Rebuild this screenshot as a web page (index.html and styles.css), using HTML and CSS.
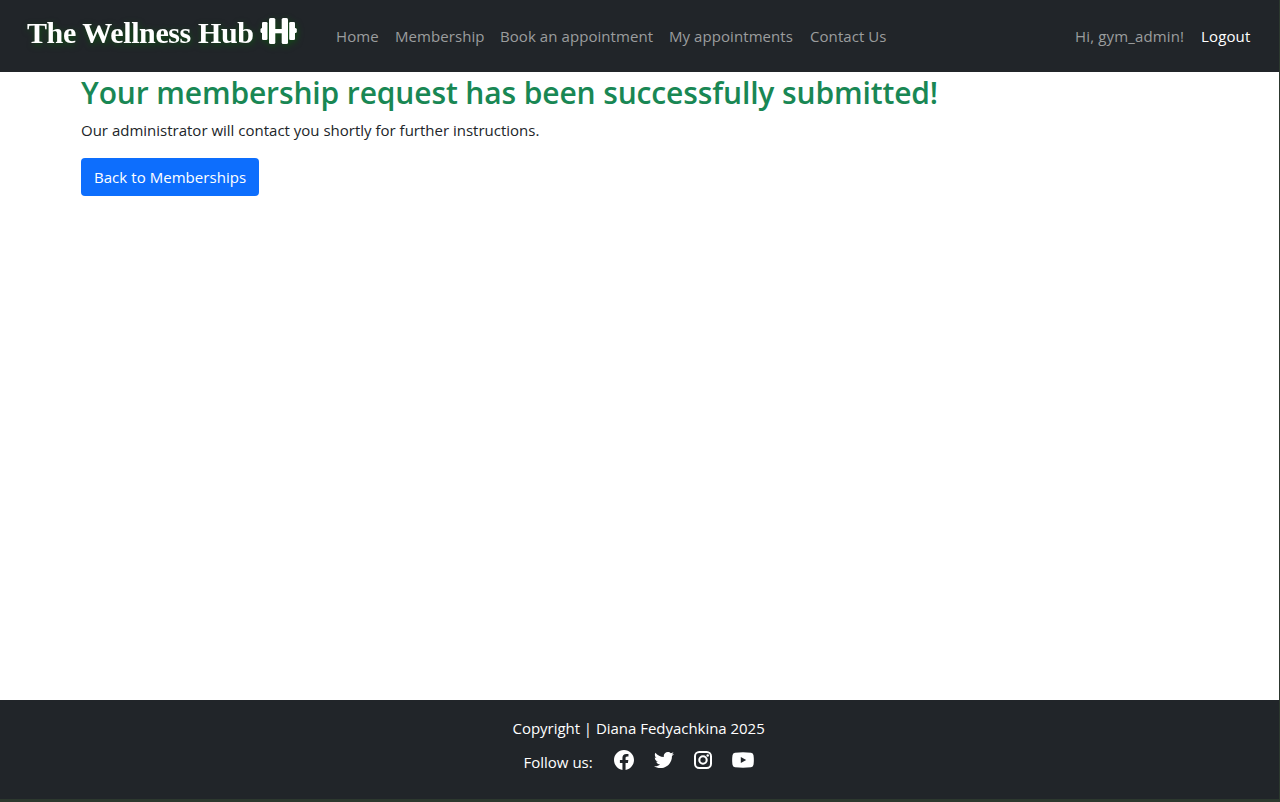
FILE: index.html
```html
<!DOCTYPE html>
<html lang="en">
<head>
<meta charset="utf-8">
<title>The Wellness Hub</title>
<link rel="stylesheet" href="styles.css">
</head>
<body>
<div class="page">
  <header class="navbar">
    <a class="brand"><span class="brand-name">The Wellness Hub</span>
      <svg class="dumbbell" width="38" height="28" viewBox="0 0 38 28" fill="#fff">
        <rect x="0.5" y="11" width="3" height="5" rx="1.5"/><rect x="2" y="5" width="5.5" height="18" rx="1.3"/><rect x="9" y="1" width="6.3" height="26" rx="1.5"/><rect x="14" y="12" width="9" height="4.3"/><rect x="21.7" y="1" width="6.3" height="26" rx="1.5"/><rect x="29.2" y="5" width="5.8" height="18" rx="1.3"/><rect x="33.5" y="11" width="3.3" height="5" rx="1.5"/>
      </svg>
    </a>
    <nav class="links">
      <a class="link home">Home</a>
      <a class="link membership">Membership</a>
      <a class="link book">Book an appointment</a>
      <a class="link mine">My appointments</a>
      <a class="link contact">Contact Us</a>
    </nav>
    <div class="account"><span class="greeting">Hi, gym_admin!</span><a class="logout">Logout</a></div>
  </header>
  <main class="content">
    <h1 class="title">Your membership request has been successfully submitted!</h1>
    <p class="message">Our administrator will contact you shortly for further instructions.</p>
    <a class="button"><span class="button-label">Back to Memberships</span></a>
  </main>
  <footer class="footer">
    <p class="copyright">Copyright | Diana Fedyachkina 2025</p>
    <div class="social">
      <span class="follow">Follow us:</span>
      <svg class="icon" width="20" height="20" viewBox="8 8 496 496"><path d="M504 256C504 119 393 8 256 8S8 119 8 256c0 123.780 90.690 226.380 209.250 245V327.690h-63V256h63v-54.640c0-62.150 37-96.480 93.670-96.480 27.140 0 55.520 4.840 55.520 4.840v61h-31.280c-30.800 0-40.410 19.120-40.410 38.730V256h68.780l-11 71.690h-57.780V501C413.310 482.380 504 379.780 504 256z"/></svg>
      <svg class="icon" width="20" height="20" viewBox="0 0 512 512"><path d="M459.37 151.716c.325 4.548.325 9.097.325 13.645 0 138.72-105.583 298.558-298.558 298.558-59.452 0-114.68-17.219-161.137-47.106 8.447.974 16.568 1.299 25.34 1.299 49.055 0 94.213-16.568 130.274-44.832-46.132-.975-84.792-31.188-98.112-72.772 6.498.974 12.995 1.624 19.818 1.624 9.421 0 18.843-1.3 27.614-3.573-48.081-9.747-84.143-51.98-84.143-102.985v-1.299c13.969 7.797 30.214 12.67 47.431 13.319-28.264-18.843-46.781-51.005-46.781-87.391 0-19.492 5.197-37.36 14.294-52.954 51.655 63.675 129.3 105.258 216.365 109.807-1.624-7.797-2.599-15.918-2.599-24.04 0-57.828 46.782-104.934 104.934-104.934 30.213 0 57.502 12.67 76.67 33.137 23.715-4.548 46.456-13.32 66.599-25.34-7.798 24.366-24.366 44.833-46.132 57.827 21.117-2.273 41.584-8.122 60.426-16.243-14.292 20.791-32.161 39.308-52.628 54.253z"/></svg>
      <svg class="icon" width="18" height="20" viewBox="0 0 18 20"><rect x="1" y="2" width="16" height="16" rx="4.300" fill="none" stroke="#fff" stroke-width="2"/><circle cx="9" cy="10" r="3.700" fill="none" stroke="#fff" stroke-width="2.100"/><circle cx="13.700" cy="5.400" r="1.250"/></svg>
      <svg class="icon" width="22" height="20" viewBox="0 0 22 20"><path fill-rule="evenodd" d="M3 2.700Q11 1.900 19 2.700Q21.200 3 21.500 5.200Q22.200 10 21.500 14.800Q21.200 17 19 17.300Q11 18.100 3 17.300Q.8 17 .5 14.800Q-.2 10 .5 5.200Q.8 3 3 2.700zM8.800 7v6l5.400-3z"/></svg>
    </div>
  </footer>
</div>
</body>
</html>
```
FILE: styles.css
```css
* { box-sizing: border-box; }
body { margin: 0; height: 802px; overflow: hidden; background: #2c382e; font-family: "Open Sans", "Noto Sans", sans-serif; font-size: 15px; line-height: 24px; color: #212529; }
.page { width: 1279px; height: 799px; display: flex; flex-direction: column; background: #fff; }
.navbar { height: 72px; flex: none; display: flex; align-items: center; background: #212529; padding: 0 28px 0 27px; white-space: nowrap; }
.brand { width: 309px; display: flex; align-items: center; color: #fff; padding-bottom: 10px; filter: drop-shadow(1px 2px 3px rgba(0, 110, 0, .55)); }
.brand-name { width: 233px; padding-top: 3px; font-family: "Liberation Serif", serif; font-size: 30px; font-weight: 700; line-height: 40px; letter-spacing: -.4px; }
.dumbbell { flex: none; }
.links { display: flex; gap: 16px; color: #9b9d9e; letter-spacing: .07px; }
.home { width: 43px; }
.membership { width: 89px; }
.book { width: 153px; }
.mine { width: 125px; }
.contact { width: 77px; }
.account { display: flex; gap: 16px; margin-left: auto; letter-spacing: .15px; }
.greeting { width: 110px; color: #9b9d9e; }
.logout { width: 50px; color: #fff; }
.content { flex: 1; padding: 2px 81px; }
.title { margin: 0 0 6px; color: #198754; font-size: 30px; line-height: 38px; font-weight: 600; letter-spacing: -.125px; white-space: nowrap; }
.message { margin: 0 0 16px; }
.button { display: inline-flex; align-items: center; width: 178px; height: 38px; padding: 0 13px; border-radius: 4px; background: #0d6efd; color: #fff; letter-spacing: .05px; white-space: nowrap; }
.footer { height: 99px; flex: none; background: #212529; color: #fff; padding-top: 16px; }
.copyright { margin: 0 auto; width: 254px; letter-spacing: -.03px; white-space: nowrap; }
.social { display: flex; align-items: center; margin: 8px 0 0 523.5px; height: 28px; }
.follow { width: 90px; white-space: nowrap; }
.icon { fill: #fff; margin: 0 20px 4px 0; flex: none; }
```
